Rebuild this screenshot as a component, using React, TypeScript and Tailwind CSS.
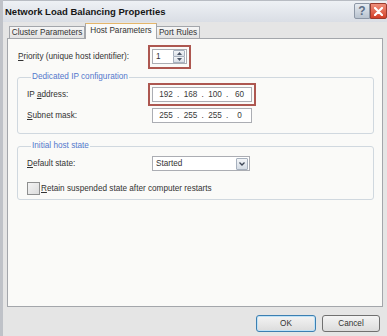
import { Fragment } from "react";

const U = ({ c }: { c: string }) => <span className="underline underline-offset-[1px]">{c}</span>;

const IpBox = ({ parts }: { parts: string[] }) => (
  <div className="flex h-[15px] w-[100px] items-center border border-[#abadb3] bg-white pl-[3px] text-[#3a3a3a]">
    {parts.map((p, i) => (
      <Fragment key={i}>
        {i > 0 && <span className="w-[4.5px] text-center">.</span>}
        <span className="w-[20px] text-center">{p}</span>
      </Fragment>
    ))}
  </div>
);

const Tri = ({ up }: { up?: boolean }) => (
  <svg width="5" height="3" viewBox="0 0 5 3">
    <path d={up ? "M0 3 L2.5 0 L5 3 Z" : "M0 0 L2.5 3 L5 0 Z"} fill="#4a5566" />
  </svg>
);

export default function App() {
  return (
    <div
      className="flex h-[336px] w-[387px] flex-col overflow-hidden border-l-[3px] border-[#bfc2c8] bg-[#e5e5e5] text-[8.2px] leading-[10px] text-[#333]"
      style={{ fontFamily: '"Liberation Sans", Arial, sans-serif' }}
    >
      {/* title bar */}
      <div className="flex h-[22px] items-start border-t border-[#b8bcc3] bg-linear-to-b from-[#eef1f5] to-[#dadee5]">
        <span className="mt-[6px] pl-[2px] text-[9.5px] font-bold leading-[10px] text-[#151515]">
          Network Load Balancing Properties
        </span>
        <div className="ml-auto mt-[2px] flex">
          <div className="flex h-[16px] w-[16px] items-center justify-center rounded-l-[2px] border border-[#8d97a6] bg-linear-to-b from-[#e6ebf1] to-[#b9c3cf] text-[12px] font-bold text-[#5d6e86]">
            ?
          </div>
          <div className="flex h-[16px] w-[17px] items-center justify-center rounded-r-[2px] border border-[#9a3a2e] bg-linear-to-b from-[#ef8f7c] to-[#d23d27]">
            <svg width="9" height="9" viewBox="0 0 9 9">
              <path d="M1 1 L8 8 M8 1 L1 8" stroke="#fff" strokeWidth="2.2" strokeLinecap="round" />
            </svg>
          </div>
        </div>
      </div>

      <div className="flex flex-1 flex-col px-[4px]">
        {/* tabs */}
        <div className="flex h-[16px] items-end pl-[2px]">
          <div className="flex h-[12px] w-[76px] items-center justify-center border border-b-0 border-[#a3a6ab] bg-linear-to-b from-[#f6f6f6] to-[#e2e2e2]">
            Cluster Parameters
          </div>
          <div className="relative z-10 -mb-px flex h-[16px] w-[72px] items-center justify-center border border-b-0 border-[#a3a6ab] border-t-[#e5b66a] bg-[#fafaf8] pb-[1px]">
            Host Parameters
          </div>
          <div className="flex h-[12px] w-[43px] items-center justify-center border border-b-0 border-l-0 border-[#a3a6ab] bg-linear-to-b from-[#f6f6f6] to-[#e2e2e2]">
            Port Rules
          </div>
        </div>

        {/* panel */}
        <div className="flex h-[269px] flex-col border border-[#a3a6ab] bg-[#fafaf8] pt-[6px]">
          <div className="flex items-center pl-[10px]">
            <span className="w-[130px]">
              <U c="P" />riority (unique host identifier):
            </span>
            <div className="border-2 border-[#ad5750] p-[2px] pb-[3px]">
              <div className="flex h-[15px] w-[35px] items-center border border-[#abadb3] bg-white pl-[3px]">
                <span>1</span>
                <div className="ml-auto mr-[1px] flex h-[13px] w-[12px] flex-col">
                  <div className="flex flex-1 items-center justify-center rounded-t-[1px] border border-[#a7b1be] bg-linear-to-b from-[#f3f5f8] to-[#d8dee6]">
                    <Tri up />
                  </div>
                  <div className="flex flex-1 items-center justify-center rounded-b-[1px] border border-t-0 border-[#a7b1be] bg-linear-to-b from-[#f3f5f8] to-[#d8dee6]">
                    <Tri />
                  </div>
                </div>
              </div>
            </div>
          </div>

          {/* dedicated ip */}
          <fieldset className="mx-[8px] ml-[9px] mt-[3px] rounded-[3px] border border-[#d0d8df] pb-[10px] pl-[9px]">
            <legend className="ml-[4px] px-[1px] leading-[10px] text-[#5378cc]">Dedicated IP configuration</legend>
            <div className="mt-[1px] flex items-center">
              <span className="w-[121px]">
                IP <U c="a" />ddress:
              </span>
              <div className="border-2 border-[#ad5750] p-[2px]">
                <IpBox parts={["192", "168", "100", "60"]} />
              </div>
            </div>
            <div className="mt-[2px] flex items-center">
              <span className="w-[125px]">
                <U c="S" />ubnet mask:
              </span>
              <IpBox parts={["255", "255", "255", "0"]} />
            </div>
          </fieldset>

          {/* initial host state */}
          <fieldset className="mx-[8px] ml-[9px] mt-[7px] rounded-[3px] border border-[#d0d8df] pb-[4px] pl-[9px]">
            <legend className="ml-[4px] px-[1px] leading-[10px] text-[#5378cc]">Initial host state</legend>
            <div className="mt-[5px] flex items-center">
              <span className="w-[125px]">
                <U c="D" />efault state:
              </span>
              <div className="flex h-[15px] w-[98px] items-center border border-[#abadb3] bg-white pl-[3px]">
                <span>Started</span>
                <div className="ml-auto mr-[1px] flex h-[12px] w-[12px] items-center justify-center rounded-[1px] border border-[#a7b1be] bg-linear-to-b from-[#f3f5f8] to-[#d5dce5]">
                  <svg width="6" height="4" viewBox="0 0 6 4">
                    <path d="M0.5 0.5 L3 3 L5.5 0.5" stroke="#3d4656" strokeWidth="1.3" fill="none" />
                  </svg>
                </div>
              </div>
            </div>
            <div className="mt-[11px] flex items-center">
              <div className="h-[13px] w-[13px] border border-[#8e8f8f] bg-linear-to-br from-[#f4f4f4] to-[#dcdcdc]" />
              <span className="ml-[1px]">
                <U c="R" />etain suspended state after computer restarts
              </span>
            </div>
          </fieldset>
        </div>

        {/* buttons */}
        <div className="mt-[8px] flex justify-end gap-[6px] pr-[3px]">
          <button className="h-[17px] w-[60px] rounded-[3px] border border-[#3c7fb1] bg-linear-to-b from-[#f4f4f4] to-[#dcdcdc] text-[8.2px] leading-[10px] text-[#333] shadow-[inset_0_0_0_1px_#bfe2f7]">
            OK
          </button>
          <button className="h-[17px] w-[58px] rounded-[3px] border border-[#707070] bg-linear-to-b from-[#f4f4f4] to-[#dcdcdc] text-[8.2px] leading-[10px] text-[#333]">
            Cancel
          </button>
        </div>
      </div>
    </div>
  );
}
